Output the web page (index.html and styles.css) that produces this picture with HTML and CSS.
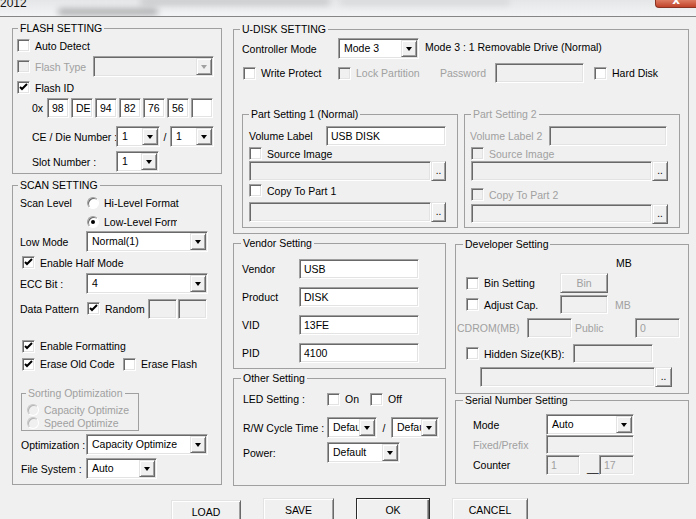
FILE: index.html
```html
<!DOCTYPE html>
<html lang="en">
<head>
    <meta charset="UTF-8">
    <meta name="viewport" content="width=device-width, initial-scale=1.0">
    <title>2012 - U-Disk Setting</title>
    <link rel="stylesheet" href="styles.css">
</head>
<body>

    <!-- Title bar (blurred in the capture) -->
    <div class="titlebar">
        <span class="title-text">2012</span>
        <span class="smudge smudge-a"></span>
        <span class="smudge smudge-b"></span>
        <span class="smudge smudge-c"></span>
        <span class="close-btn"><span>x</span></span>
    </div>

    <div class="main">

        <!-- Left column -->
        <div class="col-left">

            <div class="group flash">
                <div class="gtitle">FLASH SETTING</div>
                <div class="row fr fr-first">
                    <span class="chk"></span><span class="cap">Auto Detect</span>
                </div>
                <div class="row fr">
                    <span class="chk dis"></span><span class="cap dim cap-ft">Flash Type</span>
                    <span class="combo dis w-ft"><span class="val"></span><span class="arrow"></span></span>
                </div>
                <div class="row fr">
                    <span class="chk"><svg class="tick" viewBox="0 0 11 11"><polyline points="2,5 4,7 9,2"/></svg></span><span class="cap">Flash ID</span>
                </div>
                <div class="row hex-row">
                    <span class="hex-lead">0x</span>
                    <span class="tbox hex">98</span>
                    <span class="tbox hex">DE</span>
                    <span class="tbox hex">94</span>
                    <span class="tbox hex">82</span>
                    <span class="tbox hex">76</span>
                    <span class="tbox hex">56</span>
                    <span class="tbox hex"></span>
                </div>
                <div class="row ce-row">
                    <span class="lbl-ce">CE / Die Number :</span>
                    <span class="combo w-ce"><span class="val">1</span><span class="arrow"></span></span>
                    <span class="slash">/</span>
                    <span class="combo w-ce"><span class="val">1</span><span class="arrow"></span></span>
                </div>
                <div class="row slot-row">
                    <span class="lbl-ce">Slot Number :</span>
                    <span class="combo w-slot"><span class="val">1</span><span class="arrow"></span></span>
                </div>
            </div>

            <div class="group scan">
                <div class="gtitle">SCAN SETTING</div>
                <div class="row sr-level">
                    <span class="lbl-scan">Scan Level</span>
                    <span class="radio"></span><span class="cap">Hi-Level Format</span>
                </div>
                <div class="row sr-level2">
                    <span class="radio on"></span><span class="cap cap-clip">Low-Level Format</span>
                </div>
                <div class="row sr">
                    <span class="lbl-scan2">Low Mode</span>
                    <span class="combo w-scan"><span class="val">Normal(1)</span><span class="arrow"></span></span>
                </div>
                <div class="row sr-chk">
                    <span class="chk"><svg class="tick" viewBox="0 0 11 11"><polyline points="2,5 4,7 9,2"/></svg></span><span class="cap">Enable Half Mode</span>
                </div>
                <div class="row sr">
                    <span class="lbl-scan2">ECC Bit :</span>
                    <span class="combo w-scan"><span class="val">4</span><span class="arrow"></span></span>
                </div>
                <div class="row sr-pattern">
                    <span class="lbl-scan">Data Pattern</span>
                    <span class="chk"><svg class="tick" viewBox="0 0 11 11"><polyline points="2,5 4,7 9,2"/></svg></span><span class="cap cap-random">Random</span>
                    <span class="tbox dis w-pat"></span>
                    <span class="tbox dis w-pat"></span>
                </div>
                <div class="row sr-chk sr-fmt">
                    <span class="chk"><svg class="tick" viewBox="0 0 11 11"><polyline points="2,5 4,7 9,2"/></svg></span><span class="cap">Enable Formatting</span>
                </div>
                <div class="row sr-chk sr-erase">
                    <span class="chk"><svg class="tick" viewBox="0 0 11 11"><polyline points="2,5 4,7 9,2"/></svg></span><span class="cap cap-erase">Erase Old Code</span>
                    <span class="chk"></span><span class="cap">Erase Flash</span>
                </div>

                <div class="group sorting">
                    <div class="gtitle dim">Sorting Optimization</div>
                    <div class="row so so-first">
                        <span class="radio dis"></span><span class="cap dim">Capacity Optimize</span>
                    </div>
                    <div class="row so">
                        <span class="radio dis"></span><span class="cap dim">Speed Optimize</span>
                    </div>
                </div>

                <div class="row sr-opt">
                    <span class="lbl-scan3">Optimization :</span>
                    <span class="combo w-scan"><span class="val">Capacity Optimize</span><span class="arrow"></span></span>
                </div>
                <div class="row sr-opt">
                    <span class="lbl-scan3">File System :</span>
                    <span class="combo w-fs"><span class="val">Auto</span><span class="arrow"></span></span>
                </div>
            </div>
        </div>

        <!-- Right area -->
        <div class="col-right">

            <div class="group udisk">
                <div class="gtitle">U-DISK SETTING</div>
                <div class="row ur-mode">
                    <span class="lbl-ctrl">Controller Mode</span>
                    <span class="combo w-mode"><span class="val">Mode 3</span><span class="arrow"></span></span>
                    <span class="mode-note">Mode 3 : 1 Removable Drive (Normal)</span>
                </div>
                <div class="row ur-opts">
                    <span class="item it-wp"><span class="chk"></span><span class="cap">Write Protect</span></span>
                    <span class="item it-lock"><span class="chk dis"></span><span class="cap dim">Lock Partition</span></span>
                    <span class="cap-pw dim">Password</span>
                    <span class="tbox dis w-pw"></span>
                    <span class="item it-hd"><span class="chk"></span><span class="cap">Hard Disk</span></span>
                </div>

                <div class="parts">
                    <div class="group part">
                        <div class="gtitle">Part Setting 1 (Normal)</div>
                        <div class="row pr-vol">
                            <span class="lbl-vol">Volume Label</span>
                            <span class="tbox w-vol">USB DISK</span>
                        </div>
                        <div class="row pr-chk">
                            <span class="chk"></span><span class="cap">Source Image</span>
                        </div>
                        <div class="row pr-field">
                            <span class="tbox dis w-path"></span><span class="dots">..</span>
                        </div>
                        <div class="row pr-copy">
                            <span class="chk"></span><span class="cap">Copy To Part 1</span>
                        </div>
                        <div class="row pr-field pr-field-b">
                            <span class="tbox dis w-path"></span><span class="dots">..</span>
                        </div>
                    </div>

                    <div class="group part part2">
                        <div class="gtitle dim">Part Setting 2</div>
                        <div class="row pr-vol">
                            <span class="lbl-vol2 dim">Volume Label 2</span>
                            <span class="tbox dis w-vol2"></span>
                        </div>
                        <div class="row pr-chk">
                            <span class="chk dis"></span><span class="cap dim">Source Image</span>
                        </div>
                        <div class="row pr-field">
                            <span class="tbox dis w-path2"></span><span class="dots dots2">..</span>
                        </div>
                        <div class="row pr-copy pr-copy2">
                            <span class="chk dis"></span><span class="cap dim">Copy To Part 2</span>
                        </div>
                        <div class="row pr-field pr-field-c">
                            <span class="tbox dis w-path2 h19"></span><span class="dots dots2 h19">..</span>
                        </div>
                    </div>
                </div>
            </div>

            <div class="lower">
                <div class="col-a">

                    <div class="group vendor">
                        <div class="gtitle">Vendor Setting</div>
                        <div class="row vr vr-first">
                            <span class="lbl-vendor">Vendor</span>
                            <span class="tbox w-vendor">USB</span>
                        </div>
                        <div class="row vr">
                            <span class="lbl-vendor">Product</span>
                            <span class="tbox w-vendor">DISK</span>
                        </div>
                        <div class="row vr">
                            <span class="lbl-vendor">VID</span>
                            <span class="tbox w-vendor">13FE</span>
                        </div>
                        <div class="row vr">
                            <span class="lbl-vendor">PID</span>
                            <span class="tbox w-vendor">4100</span>
                        </div>
                    </div>

                    <div class="group other">
                        <div class="gtitle">Other Setting</div>
                        <div class="row or-led">
                            <span class="lbl-other">LED Setting :</span>
                            <span class="item it-on"><span class="chk"></span><span class="cap">On</span></span>
                            <span class="chk"></span><span class="cap">Off</span>
                        </div>
                        <div class="row or-rw">
                            <span class="lbl-other">R/W Cycle Time :</span>
                            <span class="combo w-rw"><span class="val">Default</span><span class="arrow"></span></span>
                            <span class="slash slash-rw">/</span>
                            <span class="combo w-rw2"><span class="val">Default</span><span class="arrow"></span></span>
                        </div>
                        <div class="row or-pw">
                            <span class="lbl-other">Power:</span>
                            <span class="combo w-power"><span class="val">Default</span><span class="arrow"></span></span>
                        </div>
                    </div>
                </div>

                <div class="col-b">

                    <div class="group dev">
                        <div class="gtitle">Developer Setting</div>
                        <div class="row dr-mb">MB</div>
                        <div class="row dr-bin">
                            <span class="item it-bin"><span class="chk"></span><span class="cap">Bin Setting</span></span>
                            <span class="btn-small dim">Bin</span>
                        </div>
                        <div class="row dr-adj">
                            <span class="item it-bin"><span class="chk"></span><span class="cap">Adjust Cap.</span></span>
                            <span class="tbox dis w-adj h19"></span>
                            <span class="dim mb-note">MB</span>
                        </div>
                        <div class="row dr-cd">
                            <span class="lbl-cd dim">CDROM(MB)</span>
                            <span class="tbox dis w-cd"></span>
                            <span class="lbl-public dim">Public</span>
                            <span class="tbox dis w-cd">0</span>
                        </div>
                        <div class="row dr-hid">
                            <span class="item it-hid"><span class="chk"></span><span class="cap">Hidden Size(KB):</span></span>
                            <span class="tbox dis w-hid h19"></span>
                        </div>
                        <div class="row dr-path">
                            <span class="tbox dis w-dpath"></span><span class="dots dots3">..</span>
                        </div>
                    </div>

                    <div class="group serial">
                        <div class="gtitle">Serial Number Setting</div>
                        <div class="row sn sn-first">
                            <span class="lbl-sn">Mode</span>
                            <span class="combo w-sn"><span class="val">Auto</span><span class="arrow"></span></span>
                        </div>
                        <div class="row sn sn-fixed">
                            <span class="lbl-sn dim">Fixed/Prefix</span>
                            <span class="tbox dis w-sn h19"></span>
                        </div>
                        <div class="row sn sn-counter">
                            <span class="lbl-sn">Counter</span>
                            <span class="tbox dis w-cnt1">1</span>
                            <span class="cnt-sep">__</span>
                            <span class="tbox dis w-cnt2">17</span>
                        </div>
                    </div>
                </div>
            </div>
        </div>
    </div>

    <!-- Dialog buttons -->
    <div class="buttons">
        <span class="btn b-load">LOAD</span>
        <span class="btn b-save">SAVE</span>
        <span class="btn b-ok">OK</span>
        <span class="btn b-cancel">CANCEL</span>
    </div>

</body>
</html>
```

FILE: styles.css
```css
/* Global Styles */
* {
    box-sizing: border-box;
}

body {
    margin: 0;
    width: 696px;
    height: 519px;
    overflow: hidden;
    background: #f0f0f0;
    font-family: "Liberation Sans", Arial, sans-serif;
    font-size: 10.5px;
    color: #000;
}

/* Title bar */
.titlebar {
    position: relative;
    display: flex;
    height: 17px;
    border-bottom: 1px solid #868686;
    background: linear-gradient(#e4e6e8, #f3f4f5);
    overflow: hidden;
}

.title-text {
    font-size: 12px;
    line-height: 12px;
    margin-top: -3px;
    color: #111;
}

.smudge {
    position: absolute;
    filter: blur(3px);
    border-radius: 3px;
}

.smudge-a { left: 58px; top: 9px; width: 100px; height: 6px; background: rgba(0, 0, 0, 0.3); }
.smudge-b { left: 140px; top: -1px; width: 190px; height: 6px; background: rgba(0, 0, 0, 0.15); }
.smudge-c { left: 340px; top: 0; width: 170px; height: 5px; background: rgba(0, 0, 0, 0.08); }

.close-btn {
    margin-left: auto;
    width: 41px;
    height: 8px;
    background: linear-gradient(#dd7b63, #c0432a);
    border-left: 1px solid #8a3322;
    border-bottom: 1px solid #8a3322;
    border-radius: 0 0 0 4px;
    display: flex;
    justify-content: center;
    overflow: hidden;
}

.close-btn span {
    color: #fff;
    font: bold 12px/8px "DejaVu Sans", sans-serif;
    margin-top: -4px;
}

/* Layout */
.main {
    display: flex;
    height: 481px;
    padding-left: 12px;
}

.col-left {
    width: 210px;
    padding-top: 11px;
}

.col-right {
    width: 456px;
    margin-left: 11px;
    padding-top: 12px;
}

.lower {
    display: flex;
    margin-top: 9px;
}

.col-a { width: 213px; }
.col-b { width: 234px; margin-left: 9px; }

/* Group boxes */
.group {
    display: flex;
    flex-direction: column;
    border: 1px solid #a0a0a0;
}

.group > * {
    flex: none;
}

.gtitle {
    align-self: flex-start;
    margin: -7px 0 -6px 6px;
    padding: 0 2px;
    height: 13px;
    line-height: 13px;
    background: #f0f0f0;
    white-space: nowrap;
}

.flash .gtitle, .scan .gtitle { margin-left: 5px; }
.vendor .gtitle, .other .gtitle, .dev .gtitle, .serial .gtitle { margin-left: 7px; }
.sorting .gtitle { margin-left: 4px; }

.row {
    display: flex;
    align-items: center;
    height: 21px;
}

.item {
    display: flex;
    align-items: center;
    flex: none;
}

.cap {
    white-space: nowrap;
}

.dim {
    color: #a0a0a0;
}

/* Controls */
.chk {
    flex: none;
    width: 13px;
    height: 13px;
    background: #fff;
    border: 1px solid;
    border-color: #a0a0a0 #fff #fff #a0a0a0;
    box-shadow: inset 1px 1px #696969, inset -1px -1px #e3e3e3;
}

.chk.dis {
    background: #f0f0f0;
}

.chk + .cap, .radio + .cap {
    margin-left: 5px;
}

.tick {
    display: block;
    width: 11px;
    height: 11px;
}

.tick polyline {
    fill: none;
    stroke: #000;
    stroke-width: 2;
}

.radio {
    flex: none;
    width: 12px;
    height: 12px;
    border-radius: 50%;
    background: #fff;
    border: 1px solid;
    border-color: #a0a0a0 #fff #fff #a0a0a0;
    box-shadow: inset 1px 1px #696969;
    display: flex;
    align-items: center;
    justify-content: center;
}

.radio.on::after {
    content: "";
    width: 4px;
    height: 4px;
    border-radius: 50%;
    background: #000;
}

.radio.dis {
    background: #f0f0f0;
    border-color: #c8c8c8 #fff #fff #c8c8c8;
    box-shadow: inset 1px 1px #b5b5b5;
}

.tbox {
    flex: none;
    height: 20px;
    background: #fff;
    border: 1px solid;
    border-color: #a0a0a0 #fff #fff #a0a0a0;
    box-shadow: inset 1px 1px #696969, inset -1px -1px #e3e3e3;
    padding-left: 4px;
    line-height: 18px;
    white-space: nowrap;
    overflow: hidden;
}

.tbox.dis {
    background: #f0f0f0;
    color: #a0a0a0;
}

.h19 {
    height: 19px;
}

.combo {
    flex: none;
    display: flex;
    height: 21px;
    padding: 1px;
    background: #fff;
    border: 1px solid;
    border-color: #a0a0a0 #fff #fff #a0a0a0;
    box-shadow: inset 1px 1px #696969, inset -1px -1px #e3e3e3;
}

.combo .val {
    flex: 1;
    min-width: 0;
    padding-left: 4px;
    line-height: 17px;
    white-space: nowrap;
    overflow: hidden;
}

.combo .arrow {
    flex: none;
    width: 16px;
    background: #f0f0f0;
    border: 1px solid;
    border-color: #e3e3e3 #696969 #696969 #e3e3e3;
    box-shadow: inset 1px 1px #fff, inset -1px -1px #a0a0a0;
    display: flex;
    align-items: center;
    justify-content: center;
}

.combo .arrow::after {
    content: "";
    border-left: 3.5px solid transparent;
    border-right: 3.5px solid transparent;
    border-top: 4px solid #000;
}

.combo.dis {
    background: #f0f0f0;
}

.combo.dis .arrow::after {
    border-top-color: #a0a0a0;
}

.dots, .btn-small, .btn {
    flex: none;
    background: #f0f0f0;
    border: 1px solid;
    border-color: #e3e3e3 #696969 #696969 #e3e3e3;
    box-shadow: inset 1px 1px #fff, inset -1px -1px #a0a0a0;
    display: flex;
    justify-content: center;
}

.dots {
    width: 15px;
    height: 20px;
    align-items: flex-end;
    line-height: 12px;
    padding-bottom: 3px;
    font-size: 10px;
}

.btn-small {
    width: 48px;
    height: 20px;
    align-items: center;
}

/* FLASH SETTING */
.flash { height: 146px; }
.fr { padding-left: 4px; }
.fr-first { margin-top: 6px; }
.cap-ft { width: 58px; }
.w-ft { width: 121px; }

.hex-row { height: 20px; padding-left: 19px; }
.hex-lead { width: 15px; }
.hex { width: 22px; }
.hex + .hex { margin-left: 2px; }

.ce-row { margin-top: 8px; padding-left: 19px; }
.slot-row { margin-top: 4px; padding-left: 19px; }
.lbl-ce { width: 84px; white-space: nowrap; }
.w-ce { width: 44px; }
.w-slot { width: 43px; }
.slash { width: 10px; text-align: center; }

/* SCAN SETTING */
.scan { height: 300px; margin-top: 11px; }
.sr-level { height: 18px; margin-top: 8px; padding-left: 7px; }
.sr-level2 { height: 18px; margin-top: 1px; padding-left: 74px; }
.lbl-scan { width: 67px; flex: none; }
.lbl-scan2 { width: 66px; flex: none; }
.lbl-scan3 { width: 65px; flex: none; white-space: nowrap; }
.cap-clip { width: 73px; overflow: hidden; }
.sr { padding-left: 7px; }
.w-scan { width: 122px; }
.sr-chk { padding-left: 9px; }
.sr-pattern { margin-top: 4px; padding-left: 7px; }
.cap-random { width: 43px; }
.w-pat { width: 29px; }
.w-pat + .w-pat { margin-left: 1px; }
.sr-fmt { height: 18px; margin-top: 18px; }
.sr-erase { height: 18px; }
.cap-erase { width: 83px; }

.sorting {
    width: 118px;
    height: 38px;
    margin: 20px 0 0 8px;
}

.so { height: 13px; padding-left: 5px; }
.so-first { margin-top: 9px; }

.sr-opt { margin-top: 3px; padding-left: 8px; }
.w-fs { width: 71px; }

/* U-DISK SETTING */
.udisk { height: 205px; }
.ur-mode { margin-top: 8px; padding-left: 8px; }
.lbl-ctrl { width: 96px; }
.w-mode { width: 81px; }
.mode-note { margin-left: 6px; margin-bottom: 3px; white-space: nowrap; }

.ur-opts { height: 20px; margin-top: 4px; padding-left: 9px; }
.it-wp { width: 95px; }
.it-lock { width: 102px; }
.cap-pw { width: 55px; }
.w-pw { width: 89px; }
.it-hd { margin-left: 10px; }

.parts {
    display: flex;
    gap: 6px;
    margin: 31px 0 0 8px;
}

.part { width: 216px; height: 114px; }
.pr-vol { height: 20px; margin-top: 11px; padding-left: 6px; }
.lbl-vol { width: 77px; }
.w-vol { width: 120px; }
.pr-chk { height: 15px; padding-left: 6px; }
.pr-field { height: 20px; padding-left: 6px; }
.w-path { width: 182px; }
.pr-copy { height: 19px; padding-left: 6px; }
.pr-field-b { margin-top: 2px; }

.part2 .pr-vol { padding-left: 5px; }
.lbl-vol2 { width: 79px; }
.w-vol2 { width: 118px; }
.w-path2 { width: 181px; }
.dots2 { width: 16px; }
.pr-copy2 { margin-top: 4px; }
.pr-field-c { height: 19px; }

/* Vendor Setting */
.vendor { height: 126px; }
.vr { height: 20px; margin-top: 8px; padding-left: 8px; }
.vr-first { margin-top: 15px; }
.lbl-vendor { width: 57px; }
.w-vendor { width: 120px; }

/* Other Setting */
.other { height: 108px; margin-top: 9px; }
.lbl-other { width: 84px; flex: none; white-space: nowrap; }
.or-led { height: 20px; margin-top: 10px; padding-left: 9px; }
.it-on { width: 43px; }
.or-rw { margin-top: 8px; padding-left: 9px; }
.w-rw { width: 50px; }
.slash-rw { width: 14px; }
.w-rw2 { width: 48px; }
.or-pw { margin-top: 4px; padding-left: 9px; }
.w-power { width: 73px; }

/* Developer Setting */
.dev { height: 150px; margin-top: 1px; }
.dr-mb { height: 14px; margin-top: 11px; padding-left: 160px; }
.dr-bin { height: 20px; margin-top: 3px; padding-left: 10px; }
.it-bin { width: 94px; }
.dr-adj { height: 19px; margin-top: 2px; padding-left: 10px; }
.w-adj { width: 48px; }
.mb-note { margin-left: 7px; }
.dr-cd { height: 20px; margin-top: 4px; padding-left: 1px; }
.lbl-cd { width: 70px; }
.w-cd { width: 45px; }
.lbl-public { width: 60px; margin-left: 3px; }
.dr-hid { height: 19px; margin-top: 6px; padding-left: 10px; }
.it-hid { width: 107px; }
.w-hid { width: 80px; }
.dr-path { height: 20px; margin-top: 4px; padding-left: 24px; }
.w-dpath { width: 175px; }
.dots3 { width: 17px; }

/* Serial Number Setting */
.serial { height: 84px; margin-top: 6px; }
.sn { padding-left: 17px; }
.sn-first { margin-top: 13px; }
.sn-fixed { height: 19px; }
.sn-counter { height: 20px; margin-top: 1px; }
.lbl-sn { width: 73px; flex: none; }
.w-sn { width: 88px; }
.w-cnt1 { width: 34px; }
.cnt-sep { width: 19px; padding-left: 7px; align-self: flex-end; line-height: 14px; }
.w-cnt2 { width: 35px; }

/* Dialog buttons */
.buttons {
    display: flex;
    gap: 22px;
    padding-left: 171px;
}

.btn {
    height: 24px;
    align-items: center;
    line-height: 22px;
}

.b-load { width: 70px; margin-top: 2px; }
.b-save { width: 71px; }
.b-ok {
    width: 74px;
    border: 1px solid #2b2b2b;
    box-shadow: inset 1px 1px #fff, inset -1px -1px #696969, inset -2px -2px #a0a0a0;
}
.b-cancel { width: 76px; }
```
